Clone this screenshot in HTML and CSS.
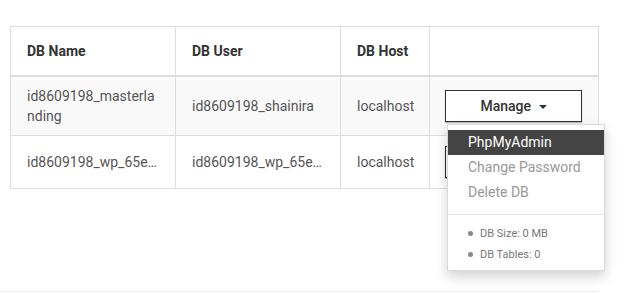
FILE: index.html
```html
<!DOCTYPE html>
<html>
<head>
<meta charset="utf-8">
<link rel="stylesheet" href="styles.css">
</head>
<body>
<div class="page">
  <table class="db-table">
    <colgroup>
      <col class="c1"><col class="c2"><col class="c3"><col class="c4">
    </colgroup>
    <thead>
      <tr>
        <th>DB Name</th>
        <th>DB User</th>
        <th>DB Host</th>
        <th></th>
      </tr>
    </thead>
    <tbody>
      <tr class="striped">
        <td class="wrap">id8609198_masterlanding</td>
        <td>id8609198_shainira</td>
        <td>localhost</td>
        <td class="act">
          <div class="dd">
            <button class="manage">Manage <span class="caret"></span></button>
            <div class="menu">
              <a class="item active">PhpMyAdmin</a>
              <a class="item">Change Password</a>
              <a class="item">Delete DB</a>
              <div class="divider"></div>
              <ul class="stats">
                <li>DB Size: 0 MB</li>
                <li>DB Tables: 0</li>
              </ul>
            </div>
          </div>
        </td>
      </tr>
      <tr>
        <td><div class="ell">id8609198_wp_65e2a1b7c4</div></td>
        <td><div class="ell">id8609198_wp_65e2a1b7c4</div></td>
        <td>localhost</td>
        <td class="act">
          <div class="dd">
            <button class="manage">Manage <span class="caret"></span></button>
          </div>
        </td>
      </tr>
    </tbody>
  </table>
  <div class="rule"></div>
</div>
</body>
</html>
```
FILE: styles.css
```css
* { box-sizing: border-box; }
html, body { margin: 0; padding: 0; background: #fff; }
body { font-family: Roboto, "Noto Sans", sans-serif; font-size: 14px; color: #555; }
.page { width: 598px; padding-top: 26px; }
.db-table {
  margin-left: 10px;
  width: 588px;
  table-layout: fixed;
  border-collapse: collapse;
}
.c1 { width: 165px; }
.c2 { width: 165px; }
.c3 { width: 89px; }
.c4 { width: 169px; }
.db-table th, .db-table td {
  border: 1px solid #ddd;
  text-align: left;
  line-height: 20px;
}
.db-table th {
  padding: 14px 16px;
  font-weight: 700;
  color: #333;
  border-bottom: 2px solid #ddd;
}
.db-table td { padding: 9px 16px; vertical-align: middle; }
.striped td { background: #f9f9f9; }
.wrap { word-break: break-all; }
.ell { white-space: nowrap; overflow: hidden; text-overflow: ellipsis; }
.act { padding-left: 15px !important; }
.dd { position: relative; width: 137px; }
.manage {
  display: block;
  width: 137px;
  height: 32px;
  margin: 1px 0;
  background: #fff;
  border: 1px solid #333;
  box-shadow: 0 1px 1px rgba(0,0,0,.25);
  font-family: Roboto, sans-serif;
  font-size: 14px;
  font-weight: 500;
  color: #333;
  padding: 0;
  cursor: pointer;
}
.caret {
  display: inline-block;
  width: 0; height: 0;
  margin-left: 4px;
  vertical-align: middle;
  border-top: 4px solid #333;
  border-left: 4px solid transparent;
  border-right: 4px solid transparent;
}
.menu {
  position: absolute;
  top: 34px;
  left: 2px;
  width: 158px;
  background: #fff;
  border: 1px solid rgba(0,0,0,.15);
  box-shadow: 0 6px 12px rgba(0,0,0,.175);
  padding: 5px 0;
  z-index: 10;
}
.item {
  display: block;
  padding: 0 20px;
  line-height: 25px;
  color: #999;
  font-size: 14px;
}
.item.active { background: #444; color: #fff; }
.divider { height: 1px; background: #e5e5e5; margin: 9px 0 0; }
.stats {
  list-style: none;
  margin: 0;
  padding: 8px 0 0 20px;
  font-size: 11px;
  color: #777;
}
.stats li { line-height: 21px; display: flex; align-items: center; }
.stats li::before {
  content: "";
  width: 5px; height: 5px;
  border-radius: 50%;
  background: #888;
  margin-right: 7px;
}
.rule { height: 1px; background: #eee; margin-top: 102px; }
```
